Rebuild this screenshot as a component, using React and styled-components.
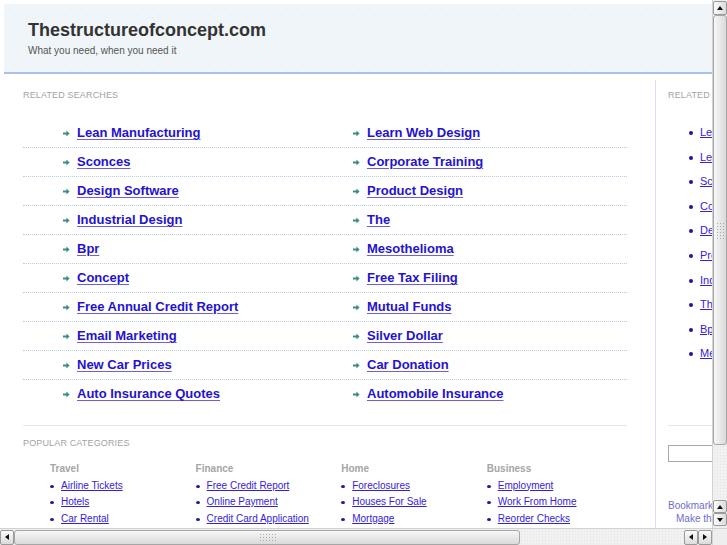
import React from 'react';
import styled, { createGlobalStyle } from 'styled-components';

const GlobalStyle = createGlobalStyle`
  html, body { margin: 0; padding: 0; overflow: hidden; background: #fff; }
  body { font-family: "Liberation Sans", Arial, sans-serif; }
  * { box-sizing: border-box; }
`;

const Frame = styled.div`
  width: 727px;
  height: 545px;
  display: grid;
  grid-template-columns: 712px 15px;
  grid-template-rows: 528px 17px;
  overflow: hidden;
  background: #fff;
`;

const Viewport = styled.div`
  overflow: hidden;
`;

const Page = styled.div`
  width: 880px;
  padding: 4px;
`;

const Header = styled.header`
  height: 70px;
  padding: 15px 0 0 24px;
  background-color: #eff5f8;
  background-image: radial-gradient(circle, #e0e9ee 0.6px, transparent 0.9px);
  background-size: 9px 9px;
  border-bottom: 2px solid #aac1e8;
`;

const Title = styled.h1`
  margin: 0;
  font-size: 18px;
  line-height: 22px;
  font-weight: bold;
  color: #333;
`;

const Tagline = styled.div`
  margin-top: 3px;
  font-size: 10px;
  line-height: 14px;
  color: #555;
`;

const Body = styled.div`
  display: flex;
  margin-top: 6px;
  height: 460px;
`;

const Main = styled.main`
  flex: none;
  width: 652px;
  border-right: 1px solid #d6e1ef;
  padding: 9px 28px 0 19px;
`;

const Side = styled.aside`
  flex: none;
  width: 200px;
  padding: 9px 0 0 12px;
`;

const SectionTitle = styled.div`
  font-size: 9px;
  line-height: 12px;
  letter-spacing: 0.15px;
  color: #a3a3a3;
  text-transform: uppercase;
  margin-top: ${p => p.$mt || 0}px;
`;

const Rows = styled.div`
  margin-top: 18px;
`;

const Row = styled.div`
  display: grid;
  grid-template-columns: 290px 1fr;
  padding: 6px 0 6px 40px;
  border-bottom: 1px dotted #b7cbe0;
  &:last-child { border-bottom-color: transparent; }
`;

const Item = styled.div`
  display: flex;
  align-items: center;
  gap: 7px;
  font-size: 13px;
  line-height: 16px;
`;

const BigLink = styled.a`
  font-size: 13px;
  font-weight: bold;
  color: #2412cf;
  text-decoration: underline;
  text-underline-offset: 2px;
  text-decoration-thickness: 1px;
  text-decoration-color: #6b60e0;
`;

const Divider = styled.div`
  height: 1px;
  background: #dfe8f1;
  margin-top: ${p => p.$mt || 0}px;
`;

const CatGrid = styled.div`
  display: grid;
  grid-template-columns: repeat(4, 145.6px);
  padding-left: 27px;
  margin-top: 12px;
`;

const CatHead = styled.div`
  font-size: 10px;
  font-weight: bold;
  color: #a5a5a5;
  line-height: 16.5px;
`;

const CatList = styled.ul`
  list-style: none;
  margin: 0;
  padding: 0;
`;

const CatItem = styled.li`
  position: relative;
  padding-left: 11px;
  font-size: 10px;
  line-height: 16.5px;
  &::before {
    content: "";
    position: absolute;
    left: 0;
    top: 7px;
    width: 4px;
    height: 3px;
    border-radius: 50%;
    background: #231499;
  }
`;

const SmallLink = styled.a`
  font-size: 10px;
  color: #3322dd;
  text-decoration: underline;
  white-space: nowrap;
`;

const SideList = styled.ul`
  list-style: none;
  margin: 19px 0 0;
  padding: 0 0 0 32px;
`;

const SideItem = styled.li`
  position: relative;
  font-size: 11px;
  line-height: 24.6px;
  white-space: nowrap;
  &::before {
    content: "";
    position: absolute;
    left: -11px;
    top: 11px;
    width: 4px;
    height: 4px;
    border-radius: 50%;
    background: #231499;
  }
`;

const SideLink = styled.a`
  font-size: 11px;
  color: #3322dd;
  text-decoration: underline;
`;

const SearchBox = styled.input`
  display: block;
  margin-top: 19px;
  width: 150px;
  height: 17px;
  border: 1px solid #a9a9a9;
  background: #fff;
  padding: 0;
`;

const Bookmark = styled.div`
  margin-top: 37px;
  font-size: 10px;
  line-height: 13px;
  color: #6d6dcf;
`;

const BookmarkLine = styled.div`
  padding-left: ${p => p.$indent || 0}px;
  white-space: nowrap;
`;

/* scrollbars */
const VBar = styled.div`
  display: flex;
  flex-direction: column;
  padding: 1px 0 2px 0;
  background: #eeeeee;
  border-left: 1px solid #d2d2d2;
`;

const HBar = styled.div`
  display: flex;
  align-items: center;
  padding: 1px 0;
  background: #eeeeee;
  border-top: 1px solid #d2d2d2;
`;

const Corner = styled.div`
  background: #eeeeee;
  border-top: 1px solid #d2d2d2;
  border-left: 1px solid #d2d2d2;
`;

const SBtn = styled.div`
  flex: none;
  width: ${p => p.$w}px;
  height: ${p => p.$h}px;
  border: 1px solid #9a9a9a;
  border-radius: 2px;
  background: linear-gradient(${p => (p.$horiz ? '180deg' : '90deg')}, #fbfbfb, #dcdcdc);
  display: flex;
  align-items: center;
  justify-content: center;
`;

const Tri = styled.span`
  width: 0;
  height: 0;
  border-style: solid;
  ${p => p.$dir === 'up' && 'border-width: 0 3.5px 4px 3.5px; border-color: transparent transparent #111 transparent;'}
  ${p => p.$dir === 'down' && 'border-width: 4px 3.5px 0 3.5px; border-color: #111 transparent transparent transparent;'}
  ${p => p.$dir === 'left' && 'border-width: 3.5px 4px 3.5px 0; border-color: transparent #111 transparent transparent;'}
  ${p => p.$dir === 'right' && 'border-width: 3.5px 0 3.5px 4px; border-color: transparent transparent transparent #111;'}
`;

const Thumb = styled.div`
  flex: none;
  ${p => (p.$horiz ? `width: ${p.$len}px; height: 15px;` : `height: ${p.$len}px; width: 14px;`)}
  border: 1px solid #a6a6a6;
  border-radius: 3px;
  background: linear-gradient(${p => (p.$horiz ? '180deg' : '90deg')}, #f7f7f7, #dadada);
  display: flex;
  align-items: center;
  justify-content: center;
`;

const Grip = styled.div`
  width: ${p => (p.$horiz ? 17 : 9)}px;
  height: ${p => (p.$horiz ? 8 : 17)}px;
  background-image: radial-gradient(circle, #a9a9a9 0.7px, transparent 1px);
  background-size: 3px 3px;
`;

const Track = styled.div`
  flex: 1;
  align-self: stretch;
  background-color: #f1f1f1;
  background-image: radial-gradient(circle, #e4e4e4 0.5px, transparent 0.8px);
  background-size: 3px 3px;
`;

const Arrow = () => (
  <svg width="7" height="7" viewBox="0 0 7 7" style={{ flex: 'none' }}>
    <polygon points="0,2.6 3.4,2.6 3.4,0.6 6.6,3.5 3.4,6.4 3.4,4.4 0,4.4" fill="#3a8d82" />
  </svg>
);

const related = [
  ['Lean Manufacturing', 'Learn Web Design'],
  ['Sconces', 'Corporate Training'],
  ['Design Software', 'Product Design'],
  ['Industrial Design', 'The'],
  ['Bpr', 'Mesothelioma'],
  ['Concept', 'Free Tax Filing'],
  ['Free Annual Credit Report', 'Mutual Funds'],
  ['Email Marketing', 'Silver Dollar'],
  ['New Car Prices', 'Car Donation'],
  ['Auto Insurance Quotes', 'Automobile Insurance'],
];

const categories = [
  { name: 'Travel', links: ['Airline Tickets', 'Hotels', 'Car Rental'] },
  { name: 'Finance', links: ['Free Credit Report', 'Online Payment', 'Credit Card Application'] },
  { name: 'Home', links: ['Foreclosures', 'Houses For Sale', 'Mortgage'] },
  { name: 'Business', links: ['Employment', 'Work From Home', 'Reorder Checks'] },
];

const sideLinks = [
  'Lean Manufacturing', 'Learn Web Design', 'Sconces', 'Corporate Training',
  'Design Software', 'Product Design', 'Industrial Design', 'The', 'Bpr', 'Mesothelioma',
];

export default function App() {
  return (
    <>
      <GlobalStyle />
      <Frame>
        <Viewport>
          <Page>
            <Header>
              <Title>Thestructureofconcept.com</Title>
              <Tagline>What you need, when you need it</Tagline>
            </Header>
            <Body>
              <Main>
                <SectionTitle>Related Searches</SectionTitle>
                <Rows>
                  {related.map((pair, i) => (
                    <Row key={i}>
                      {pair.map(t => (
                        <Item key={t}>
                          <Arrow />
                          <BigLink href="#">{t}</BigLink>
                        </Item>
                      ))}
                    </Row>
                  ))}
                </Rows>
                <Divider $mt={16} />
                <SectionTitle $mt={11}>Popular Categories</SectionTitle>
                <CatGrid>
                  {categories.map(c => (
                    <div key={c.name}>
                      <CatHead>{c.name}</CatHead>
                      <CatList>
                        {c.links.map(l => (
                          <CatItem key={l}>
                            <SmallLink href="#">{l}</SmallLink>
                          </CatItem>
                        ))}
                      </CatList>
                    </div>
                  ))}
                </CatGrid>
              </Main>
              <Side>
                <SectionTitle>Related Searches</SectionTitle>
                <SideList>
                  {sideLinks.map(l => (
                    <SideItem key={l}>
                      <SideLink href="#">{l}</SideLink>
                    </SideItem>
                  ))}
                </SideList>
                <Divider $mt={59} />
                <SearchBox type="text" />
                <Bookmark>
                  <BookmarkLine>Bookmark this page</BookmarkLine>
                  <BookmarkLine $indent={8}>Make this your homepage</BookmarkLine>
                </Bookmark>
              </Side>
            </Body>
          </Page>
        </Viewport>
        <VBar>
          <SBtn $w={14} $h={14}><Tri $dir="up" /></SBtn>
          <Thumb $len={430}><Grip /></Thumb>
          <Track />
          <SBtn $w={14} $h={13}><Tri $dir="up" /></SBtn>
          <SBtn $w={14} $h={13}><Tri $dir="down" /></SBtn>
        </VBar>
        <HBar>
          <SBtn $w={14} $h={15} $horiz><Tri $dir="left" /></SBtn>
          <Thumb $len={506} $horiz><Grip $horiz /></Thumb>
          <Track />
          <SBtn $w={14} $h={15} $horiz><Tri $dir="left" /></SBtn>
          <SBtn $w={14} $h={15} $horiz><Tri $dir="right" /></SBtn>
        </HBar>
        <Corner />
      </Frame>
    </>
  );
}
